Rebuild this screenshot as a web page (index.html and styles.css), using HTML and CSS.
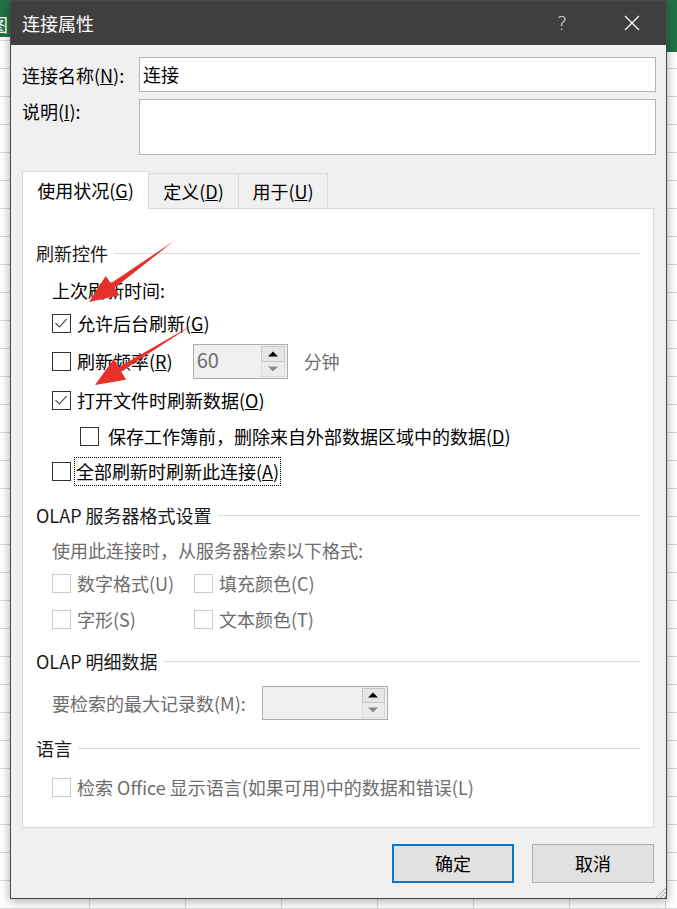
FILE: index.html
```html
<!DOCTYPE html>
<html lang="zh-CN">
<head>
<meta charset="utf-8">
<title>连接属性</title>
<link rel="stylesheet" href="styles.css">
</head>
<body>
<div class="desk">
  <span class="sheet-glyph">图</span>
  <div class="dialog">
    <div class="titlebar">
      <span class="title">连接属性</span>
      <span class="tb-btn help">?</span>
      <span class="tb-btn close">
        <svg width="16" height="16" viewBox="0 0 16 16"><path d="M1 1 L15 15 M15 1 L1 15" stroke="#fff" stroke-width="1.2" fill="none"/></svg>
      </span>
    </div>
    <div class="content">
      <div class="field-row">
        <span class="field-label">连接名称(<u>N</u>):</span>
        <div class="input">连接</div>
      </div>
      <div class="field-row desc-row">
        <span class="field-label">说明(<u>I</u>):</span>
        <div class="textarea"></div>
      </div>

      <div class="tabs">
        <div class="tab active">使用状况(<u>G</u>)</div>
        <div class="tab tab-def">定义(<u>D</u>)</div>
        <div class="tab tab-use">用于(<u>U</u>)</div>
      </div>

      <div class="panel">
        <div class="group-title first"><span>刷新控件</span><i class="rule"></i></div>
        <div class="plain-row last-refresh">上次刷新时间:</div>

        <div class="cb-row r1"><span class="cb checked"></span><span class="cb-label">允许后台刷新(<u>G</u>)</span></div>
        <div class="cb-row r2">
          <span class="cb"></span><span class="cb-label">刷新频率(<u>R</u>)</span>
          <div class="spin spin-freq">
            <span class="spin-value">60</span>
            <span class="spin-btns"><span class="spin-up"></span><span class="spin-down"></span></span>
          </div>
          <span class="unit">分钟</span>
        </div>
        <div class="cb-row r3"><span class="cb checked"></span><span class="cb-label">打开文件时刷新数据(<u>O</u>)</span></div>
        <div class="cb-row r4 indent"><span class="cb"></span><span class="cb-label">保存工作簿前，删除来自外部数据区域中的数据(<u>D</u>)</span></div>
        <div class="cb-row r5"><span class="cb"></span><span class="cb-label focus">全部刷新时刷新此连接(<u>A</u>)</span></div>

        <div class="group-title g2"><span>OLAP 服务器格式设置</span><i class="rule"></i></div>
        <div class="plain-row disabled olap-text">使用此连接时，从服务器检索以下格式:</div>
        <div class="cb-grid">
          <div class="cb-row disabled"><span class="cb"></span><span class="cb-label">数字格式(U)</span></div>
          <div class="cb-row disabled"><span class="cb"></span><span class="cb-label">填充颜色(C)</span></div>
          <div class="cb-row disabled"><span class="cb"></span><span class="cb-label">字形(S)</span></div>
          <div class="cb-row disabled"><span class="cb"></span><span class="cb-label">文本颜色(T)</span></div>
        </div>

        <div class="group-title g3"><span>OLAP 明细数据</span><i class="rule"></i></div>
        <div class="plain-row disabled max-row">
          <span>要检索的最大记录数(M):</span>
          <div class="spin spin-max">
            <span class="spin-value"></span>
            <span class="spin-btns"><span class="spin-up"></span><span class="spin-down"></span></span>
          </div>
        </div>

        <div class="group-title g4"><span>语言</span><i class="rule"></i></div>
        <div class="cb-row disabled lang-row"><span class="cb"></span><span class="cb-label">检索 Office 显示语言(如果可用)中的数据和错误(L)</span></div>
      </div>

      <div class="buttons">
        <button class="btn default">确定</button>
        <button class="btn">取消</button>
      </div>
    </div>
    <span class="grip"></span>
  </div>

  <svg class="arrows" width="677" height="909" viewBox="0 0 677 909">
    <polygon fill="#e8302a" points="174,241 114.5,288 119.7,295.3 89,302 105.7,275.9 110.9,283.2"/>
    <polygon fill="#e8302a" points="194,324 121.2,371.5 126.1,379.7 95,385 113.7,359.1 118.6,367.3"/>
  </svg>
</div>
</body>
</html>
```

FILE: styles.css
```css
* { box-sizing: border-box; }

html, body {
  margin: 0;
  padding: 0;
}

body {
  width: 677px;
  height: 909px;
  overflow: hidden;
  font-family: "Noto Sans CJK SC", "Microsoft YaHei", sans-serif;
  font-size: 18px;
  color: #000;
}

.desk {
  position: relative;
  width: 677px;
  height: 909px;
  padding: 0 10px;
  overflow: hidden;
  background:
    linear-gradient(#217346, #217346) left top / 10px 37px no-repeat,
    linear-gradient(#217346, #217346) right top / 10px 52px no-repeat,
    repeating-linear-gradient(to right, transparent 0 89px, #d4d4d4 89px 90px, transparent 90px 96px),
    repeating-linear-gradient(to bottom, transparent 0 12px, #d8d8d8 12px 13px, transparent 13px 28px),
    #ffffff;
}

.sheet-glyph {
  position: absolute;
  left: -10px;
  top: 12px;
  color: #fff;
  font-size: 18px;
  line-height: 24px;
}

.dialog {
  position: relative;
  width: 657px;
  height: 899px;
  background: #f0f0f0;
  border: 1px solid #4a4a4a;
  box-shadow: 0 2px 10px rgba(0, 0, 0, 0.35);
  display: flex;
  flex-direction: column;
}

.titlebar {
  height: 44px;
  background: #3f3f3f;
  display: flex;
  align-items: center;
  padding: 0 11px 0 11px;
  flex: none;
}

.title {
  flex: 1;
  color: #fff;
  font-size: 18px;
  line-height: 24px;
}

.tb-btn {
  width: 46px;
  height: 44px;
  display: flex;
  align-items: center;
  justify-content: center;
  color: #e6e6e6;
}

.help {
  font-family: "DejaVu Sans", sans-serif;
  font-size: 19px;
  font-weight: 200;
  margin-right: 24px;
}

.content {
  padding: 12px 10px 0 11px;
  display: flex;
  flex-direction: column;
}

.field-row {
  display: flex;
  align-items: center;
}

.field-label {
  width: 117px;
  flex: none;
  line-height: 24px;
}

.input {
  flex: 1;
  height: 35px;
  background: #fff;
  border: 1px solid #b4b4b4;
  padding: 0 4px 2px 3px;
  display: flex;
  align-items: center;
  line-height: 24px;
}

.desc-row {
  margin-top: 7px;
  align-items: flex-start;
}

.textarea {
  flex: 1;
  height: 56px;
  background: #fff;
  border: 1px solid #b4b4b4;
}

.tabs {
  margin-top: 16px;
  height: 38px;
  margin-bottom: -1px;
  display: flex;
  align-items: flex-end;
  position: relative;
  z-index: 1;
}

.tab {
  height: 35px;
  margin-bottom: 1px;
  background: #f0f0f0;
  border-top: 1px solid #d9d9d9;
  border-right: 1px solid #d9d9d9;
  display: flex;
  align-items: center;
  justify-content: center;
  line-height: 24px;
  padding-bottom: 1px;
}

.tab.active {
  width: 127px;
  height: 38px;
  margin-bottom: 0;
  background: #fff;
  border-left: 1px solid #d9d9d9;
  padding-bottom: 2px;
}

.tab-def { width: 90px; }
.tab-use { width: 89px; }

.panel {
  margin-right: 2px;
  height: 620px;
  background: #fff;
  border: 1px solid #d9d9d9;
  padding: 0 13px;
  display: flex;
  flex-direction: column;
}

.group-title {
  display: flex;
  align-items: center;
  height: 24px;
  line-height: 24px;
  color: #1a1a1a;
}

.group-title .rule {
  flex: 1;
  height: 1px;
  background: #dcdcdc;
  margin-left: 6px;
}

.group-title.first { margin-top: 32px; }
.group-title.g2 { margin-top: 17px; }
.group-title.g3 { margin-top: 15px; }
.group-title.g4 { margin-top: 16px; }

.plain-row {
  margin-left: 16px;
  height: 24px;
  line-height: 24px;
  display: flex;
  align-items: center;
}

.last-refresh { margin-top: 13px; }
.olap-text { margin-top: 11px; }

.cb-row {
  margin-left: 16px;
  height: 30px;
  display: flex;
  align-items: center;
  line-height: 24px;
}

.cb-row.r1 { margin-top: 6px; }
.cb-row.r2 { margin-top: 5px; height: 36px; }
.cb-row.r3 { margin-top: 6px; }
.cb-row.r4 { margin-top: 6px; }
.cb-row.r5 { margin-top: 5px; }
.cb-row.indent { margin-left: 44px; }

.cb {
  width: 19px;
  height: 19px;
  flex: none;
  border: 1px solid #333;
  background: #fff;
  margin-right: 6px;
  position: relative;
}

.cb.checked::after {
  content: "";
  position: absolute;
  left: 5px;
  top: 1px;
  width: 5px;
  height: 10px;
  border-right: 1.5px solid #333;
  border-bottom: 1.5px solid #333;
  transform: rotate(42deg);
  transform-origin: center;
}

.indent .cb { margin-right: 9px; }

.cb-label.focus {
  outline: 1px dotted #000;
  outline-offset: 0;
  padding: 1px 1px 2px 1px;
  margin-left: -2px;
}

.disabled { color: #6d6d6d; }
.disabled .cb { border-color: #cccccc; }

.spin {
  height: 35px;
  border: 1px solid #adadad;
  background: #f0f0f0;
  display: flex;
  align-items: center;
  justify-content: space-between;
  padding: 0 2px 0 3px;
}

.spin-freq {
  width: 95px;
  margin-left: 20px;
}

.spin-value {
  color: #6d6d6d;
  font-size: 20px;
  line-height: 24px;
  padding-bottom: 2px;
}

.spin-btns {
  display: flex;
  flex-direction: column;
  width: 24px;
  height: 31px;
}

.spin-up, .spin-down {
  flex: 1;
  position: relative;
}

.spin-up {
  background: #e5e5e5;
  border: 1px solid #c6c6c6;
}

.spin-down {
  background: #ececec;
  border: 1px solid #dadada;
  border-top: none;
}

.spin-up::after, .spin-down::after {
  content: "";
  position: absolute;
  left: 50%;
  top: 50%;
  width: 0;
  height: 0;
  border-left: 5px solid transparent;
  border-right: 5px solid transparent;
  transform: translate(-50%, -50%);
}

.spin-up::after { border-bottom: 5px solid #000; }
.spin-down::after { border-top: 5px solid #8a8a8a; }

.unit {
  margin-left: 16px;
  color: #6d6d6d;
}

.cb-grid {
  margin-top: 6px;
  margin-left: 16px;
  display: grid;
  grid-template-columns: 142px auto;
  row-gap: 6px;
}

.cb-grid .cb-row { margin-left: 0; }

.max-row {
  margin-top: 12px;
  height: 35px;
}

.spin-max {
  width: 126px;
  height: 34px;
  margin-left: 16px;
  padding-right: 2px;
}

.spin-max .spin-btns { height: 30px; width: 23px; }

.lang-row { margin-top: 12px; }

.buttons {
  margin-top: 16px;
  margin-right: 2px;
  display: flex;
  justify-content: flex-end;
  gap: 18px;
}

.btn {
  width: 122px;
  height: 39px;
  background: #e1e1e1;
  border: 1px solid #adadad;
  font-family: "Noto Sans CJK SC", sans-serif;
  font-size: 18px;
  line-height: 24px;
  color: #000;
  padding: 0 0 2px 0;
}

.btn.default {
  border: 2px solid #0078d7;
}

.grip {
  position: absolute;
  right: 0;
  bottom: 0;
  width: 11px;
  height: 11px;
  background: repeating-linear-gradient(135deg, transparent 0 2px, #a0a0a0 2px 3px);
  clip-path: polygon(100% 0, 100% 100%, 0 100%);
}

.arrows {
  position: absolute;
  left: 0;
  top: 0;
  pointer-events: none;
}
```
